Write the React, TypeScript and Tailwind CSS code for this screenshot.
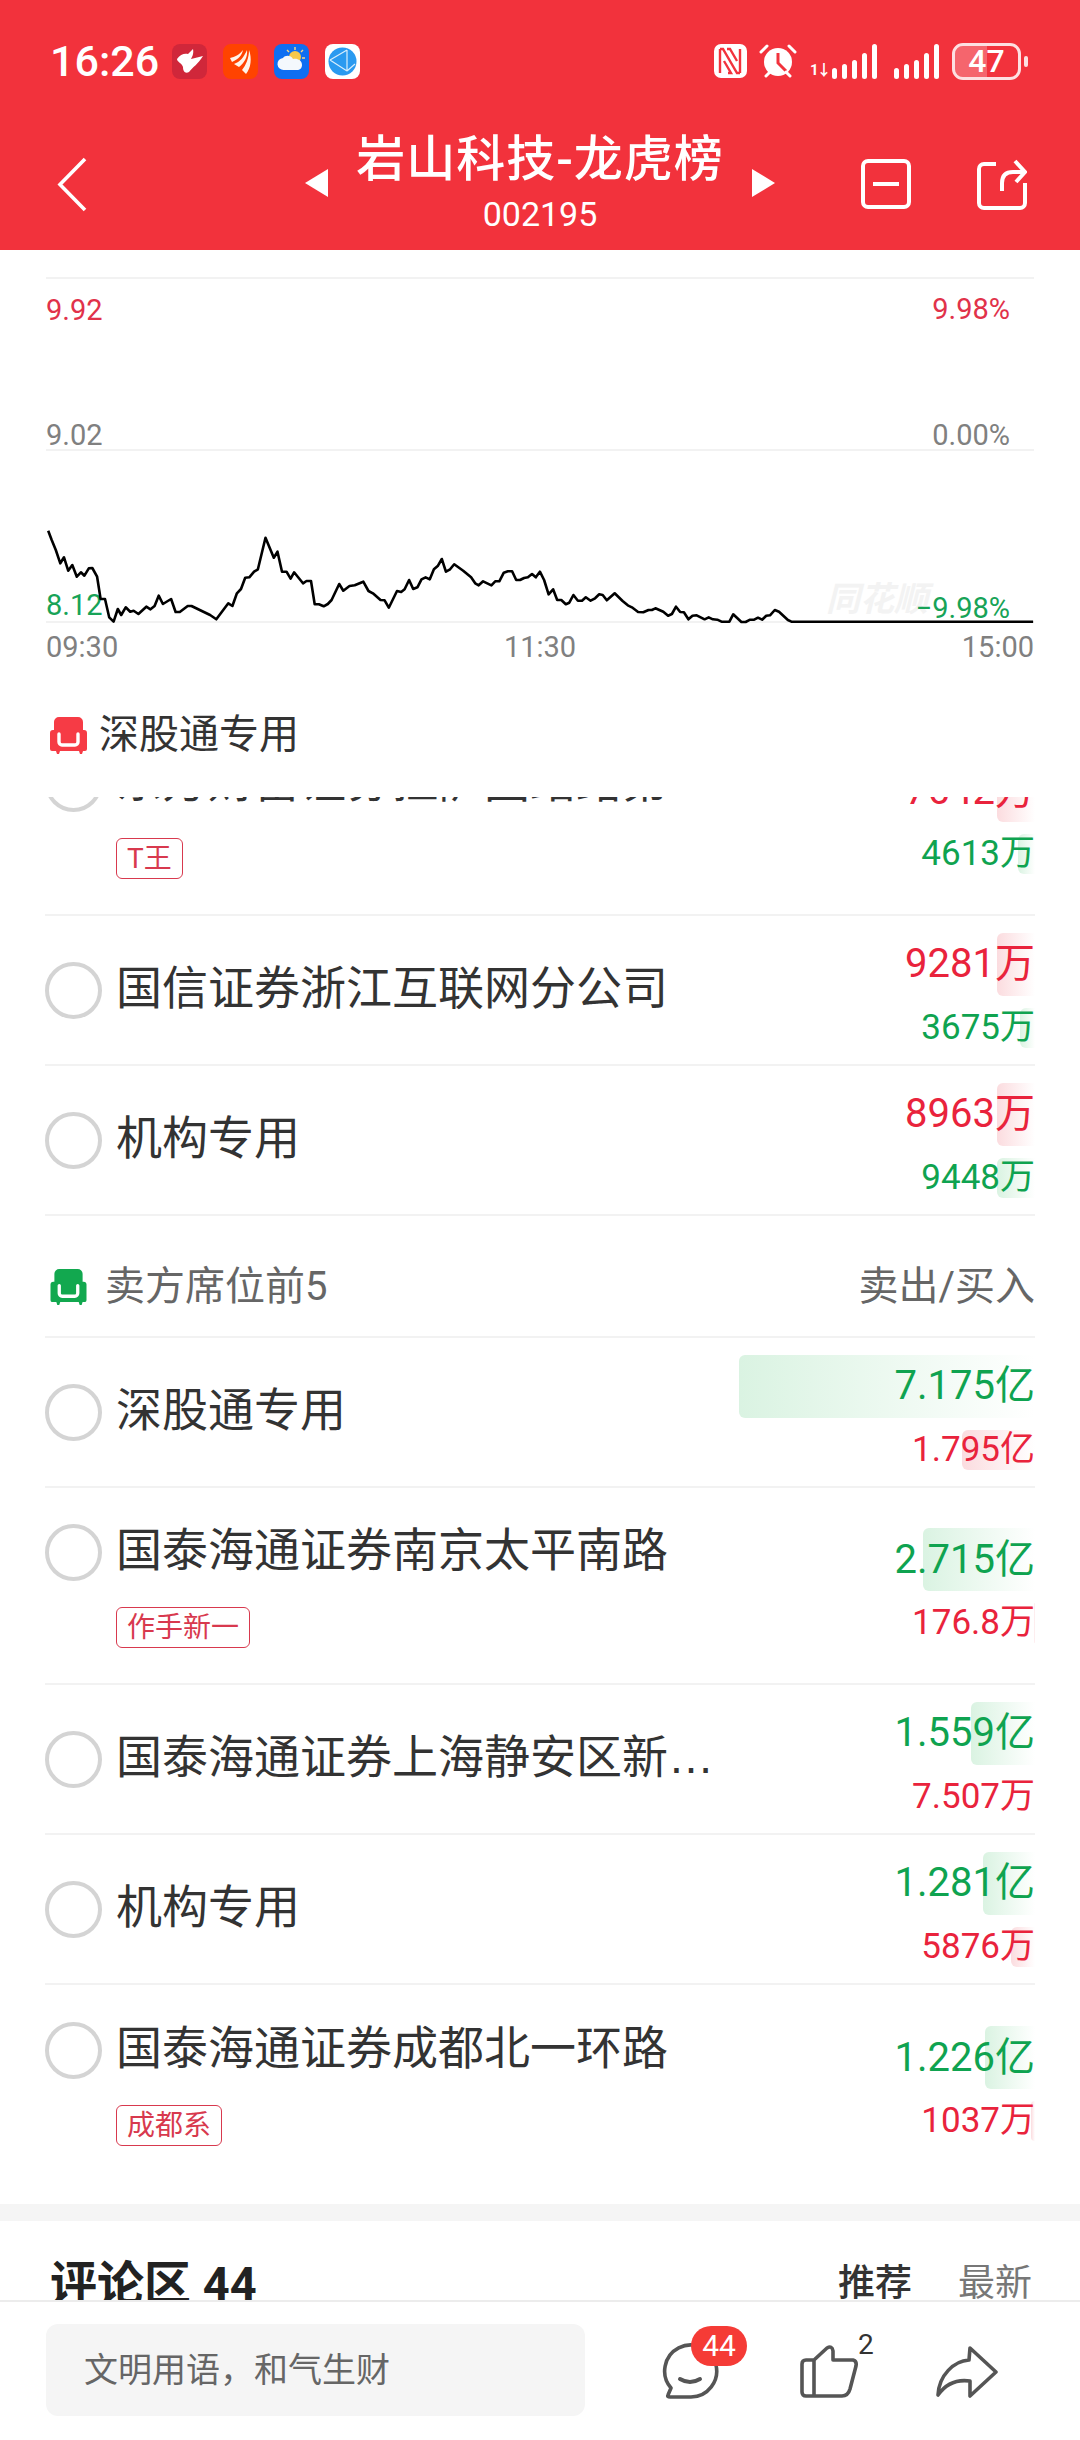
const zoomA = [[140,92],[150,120],[162,150],[175,190],[186,172],[198,212],[210,195],[223,230],[235,217],[245,227],[258,205],[268,204],[282,230],[292,297],[305,297],[317,352],[330,365],[342,327],[352,345],[365,322],[378,335],[388,332],[402,342],[425,320],[437,328],[449,318],[461,287],[473,312],[497,297],[510,336],[522,336],[545,318],[556,318],[610,345],[628,358],[663,310],[675,318],[688,280],[700,267],[712,233],[724,232],[738,215],[749,208],[771,113],[795,173],[806,155],[819,215],[832,215],[844,236],[854,217],[880,250],[890,243],[903,243],[914,313],[926,313],[940,319],[952,312],[963,300],[985,252],[997,272],[1015,258],[1030,256],[1055,245],[1070,273],[1083,280],[1105,300],[1117,301],[1129,323],[1153,273],[1165,276],[1175,268],[1188,240],[1200,267],[1212,262],[1224,238],[1236,232],[1248,238],[1260,208],[1272,197],[1283,177],[1295,215],[1307,208],[1319,193],[1345,212],[1368,232],[1380,250],[1390,256],[1403,244],[1427,256],[1438,244],[1450,244],[1463,218],[1475,214],[1487,214],[1499,240],[1510,240],[1522,234],[1533,232],[1545,222],[1556,232],[1568,215]]
const zoomB = [[12,240],[25,283],[38,268],[50,300],[62,300],[75,313],[85,308],[97,285],[110,302],[122,302],[133,292],[147,302],[160,295],[172,283],[182,285],[194,301],[217,280],[240,303],[255,316],[267,322],[285,336],[300,337],[315,330],[325,330],[335,325],[358,335],[372,347],[383,342],[395,320],[407,336],[418,337],[431,358],[443,347],[455,346],[478,358],[490,352],[502,358],[515,359],[527,365],[550,365],[561,343],[585,366],[597,366],[610,359],[622,359],[633,353],[645,359],[657,347],[668,346],[682,330],[694,335],[720,360],[730,365],[1432,365]]

const linePoints = [
  ...zoomA.map(([x, y]) => `${(x / 2.904).toFixed(1)},${(500 + y / 3).toFixed(1)}`),
  ...zoomB.map(([x, y]) => `${(540 + x / 2.904).toFixed(1)},${(500 + y / 3).toFixed(1)}`),
].join(' ')

interface Seat {
  name: string
  tag?: string
  first: string
  second: string
  firstBar: number
  secondBar: number
}

const buySeats: Seat[] = [
  { name: '东方财富证券拉萨团结路第二', tag: 'T王', first: '7642万', second: '4613万', firstBar: 38, secondBar: 17 },
  { name: '国信证券浙江互联网分公司', first: '9281万', second: '3675万', firstBar: 38, secondBar: 15 },
  { name: '机构专用', first: '8963万', second: '9448万', firstBar: 38, secondBar: 38 },
]

const sellSeats: Seat[] = [
  { name: '深股通专用', first: '7.175亿', second: '1.795亿', firstBar: 296, secondBar: 73 },
  { name: '国泰海通证券南京太平南路', tag: '作手新一', first: '2.715亿', second: '176.8万', firstBar: 112, secondBar: 1 },
  { name: '国泰海通证券上海静安区新闸路', first: '1.559亿', second: '7.507万', firstBar: 64, secondBar: 0 },
  { name: '机构专用', first: '1.281亿', second: '5876万', firstBar: 52, secondBar: 24 },
  { name: '国泰海通证券成都北一环路', tag: '成都系', first: '1.226亿', second: '1037万', firstBar: 50, secondBar: 4 },
]

function Sofa({ className }: { className: string }) {
  return (
    <svg viewBox="0 0 37 37" className={className}>
      <path
        fill="currentColor"
        d="M9 0h19a5 5 0 0 1 5 5v8h1a3 3 0 0 1 3 3v16a2 2 0 0 1-2 2h-2l-1 3h-2l-1-3H10l-1 3H7l-1-3H2a2 2 0 0 1-2-2V16a3 3 0 0 1 3-3h1V5a5 5 0 0 1 5-5z"
      />
      <path d="M9 17v8a3 3 0 0 0 3 3h13a3 3 0 0 0 3-3v-8" fill="none" stroke="#fff" strokeWidth="3.4" strokeLinecap="round" />
    </svg>
  )
}

function AppIcons() {
  return (
    <div className="flex gap-[16px] ml-[13px]">
      <svg viewBox="0 0 35 35" className="w-[35px] h-[35px]">
        <rect width="35" height="35" rx="8" fill="#d0273a" />
        <path fill="#fff" d="M5 15c3-5 8-6 11-5l5-5c1 5-1 8-2 10l12-3c-5 8-10 11-14 16-4 2-6-1-6-5-1-4-6-5-6-8z" />
      </svg>
      <svg viewBox="0 0 35 35" className="w-[35px] h-[35px]">
        <rect width="35" height="35" rx="8" fill="#ff4300" />
        <path fill="#fff4ea" d="M7 14c5-1 9-3 13-8-1 5-4 9-11 12z" />
        <path fill="#fff4ea" d="M11 20c6-2 10-7 13-14 1 7-3 13-8 17z" />
        <path fill="#fff4ea" d="M19 26c4-5 7-12 7-20 3 8 2 18-3 24z" />
      </svg>
      <svg viewBox="0 0 35 35" className="w-[35px] h-[35px]">
        <rect width="35" height="35" rx="8" fill="#0e6ef2" />
        <circle cx="21" cy="13" r="6" fill="#f6c84b" />
        <path d="M21 3v3M29 6l-2 2M31 14h-3M13 6l2 2" stroke="#f6d98a" strokeWidth="1.4" />
        <path fill="#f4f8fd" d="M10 26a6 6 0 0 1-1-12c2-3 8-3 10 1 4-1 9 1 9 6 0 3-2 5-5 5z" />
      </svg>
      <svg viewBox="0 0 35 35" className="w-[35px] h-[35px]">
        <rect width="35" height="35" rx="8" fill="#fff" />
        <circle cx="17.5" cy="17.5" r="14" fill="#2a9af0" />
        <path d="M5 16L22 6M5 16l17 11M22 6l0 21M22 27l8-7" stroke="#d8eefc" strokeWidth="1.2" fill="none" />
      </svg>
    </div>
  )
}

function SignalBars({ small }: { small?: boolean }) {
  return (
    <div className="flex items-end gap-[5px]">
      {small && <span className="text-white text-[15px] leading-[18px] font-bold w-[15px] tracking-[-2px] mr-[2px]">1↓</span>}
      <div className="w-[5px] h-[11px] rounded-full bg-white" />
      <div className="w-[5px] h-[15px] rounded-full bg-white" />
      <div className="w-[5px] h-[19px] rounded-full bg-white" />
      <div className="w-[5px] h-[26px] rounded-full bg-white" />
      <div className="w-[5px] h-[35px] rounded-full bg-white" />
    </div>
  )
}

function StatusBar() {
  return (
    <div className="h-[118px] flex items-center justify-between pl-[50px] pr-[52px] pt-[4px] text-white">
      <div className="flex items-center">
        <span className="text-[43px] leading-[43px] font-medium">16:26</span>
        <AppIcons />
      </div>
      <div className="flex items-center">
        <svg viewBox="0 0 33 34" className="w-[33px] h-[34px]">
          <rect width="33" height="34" rx="7" fill="#fff" />
          <path d="M6 5v24M6 5l3 0 14 24 3 0M26 29V5M13 5h3l7 12M10 17l7 12h-3" fill="none" stroke="#f2323c" strokeWidth="2.4" />
        </svg>
        <svg viewBox="0 0 38 36" className="w-[38px] h-[36px] ml-[12px]">
          <circle cx="19" cy="19" r="14" fill="#fff" />
          <path d="M19 10v10l8 8" fill="none" stroke="#f2323c" strokeWidth="3" />
          <path d="M2 9l6-6M36 9l-6-6M7 33l4-4M31 33l-4-4" stroke="#fff" strokeWidth="3" strokeLinecap="round" />
        </svg>
        <div className="ml-[13px]"><SignalBars small /></div>
        <div className="ml-[17px]"><SignalBars /></div>
        <div className="flex items-center ml-[13px]">
          <div className="relative w-[69px] h-[37px] rounded-[11px] border-[3px] border-white/85 overflow-hidden">
            <div className="absolute left-0 top-0 bottom-0 w-[32px] bg-white/25" />
            <span className="absolute inset-0 flex items-center justify-center text-[32px] leading-none font-medium">47</span>
          </div>
          <div className="w-[4px] h-[11px] rounded-full bg-white/85 ml-[3px]" />
        </div>
      </div>
    </div>
  )
}

function NavBar() {
  return (
    <div className="h-[132px] grid grid-cols-[1fr_auto_1fr] items-center text-white">
      <div className="pl-[56px]">
        <svg viewBox="0 0 32 55" className="w-[32px] h-[55px]">
          <path d="M29 2L4 27.5L29 53" fill="none" stroke="#fff" strokeWidth="3.6" />
        </svg>
      </div>
      <div className="flex items-center gap-[28px] -mt-[2px]">
        <svg viewBox="0 0 23 28" className="w-[23px] h-[28px]"><path d="M23 0v28L0 14z" fill="#fff" /></svg>
        <div className="flex flex-col items-center">
          <span className="text-[49px] leading-[58px] font-medium tracking-[1px] -mt-[2px]">岩山科技-龙虎榜</span>
          <span className="text-[34px] leading-[40px] mt-[5px]">002195</span>
        </div>
        <svg viewBox="0 0 23 28" className="w-[23px] h-[28px]"><path d="M0 0v28L23 14z" fill="#fff" /></svg>
      </div>
      <div className="flex items-center justify-end gap-[66px] pr-[53px]">
        <svg viewBox="0 0 50 50" className="w-[50px] h-[50px]">
          <rect x="2" y="2" width="46" height="46" rx="5" fill="none" stroke="#fff" strokeWidth="4" />
          <path d="M12 25h26" stroke="#fff" strokeWidth="4" />
        </svg>
        <svg viewBox="0 0 50 52" className="w-[50px] h-[52px]">
          <path d="M19 6H7a5 5 0 0 0-5 5v34a5 5 0 0 0 5 5h36a5 5 0 0 0 5-5V25" fill="none" stroke="#fff" strokeWidth="4" />
          <path d="M25 33v-8q0-11 11-11h11M38 3l10 11-9 10" fill="none" stroke="#fff" strokeWidth="4" />
        </svg>
      </div>
    </div>
  )
}

function Chart() {
  return (
    <section className="h-[547px] pt-[27px]">
      <div className="relative mx-[46px] h-[345px] text-[29px] leading-[34px]">
        <div className="h-[172px] border-t-2 border-[#f2f2f2]" />
        <div className="h-[172px] border-t-2 border-[#f2f2f2]" />
        <div className="border-t-2 border-[#f2f2f2]" />
        <span className="absolute left-0 top-[16px] text-[#e1324a]">9.92</span>
        <span className="absolute right-[24px] top-[15px] text-[#e1324a]">9.98%</span>
        <span className="absolute left-0 top-[141px] text-[#808080]">9.02</span>
        <span className="absolute right-[24px] top-[141px] text-[#808080]">0.00%</span>
        <span className="absolute left-[780px] top-[304px] text-[34px] leading-[36px] italic font-bold text-[#f3f3f3]">同花顺</span>
        <span className="absolute left-0 top-[311px] text-[#17a357]">8.12</span>
        <span className="absolute right-[24px] top-[314px] text-[#17a357]">−9.98%</span>
        <svg viewBox="46 277 989 347" className="absolute left-0 top-0 w-[989px] h-[347px]">
          <polyline points={linePoints} fill="none" stroke="#000" strokeWidth="2.6" strokeLinejoin="round" />
        </svg>
      </div>
      <div className="mx-[46px] h-[52px] flex items-center justify-between text-[29px] text-[#808080]">
        <span>09:30</span>
        <span>11:30</span>
        <span>15:00</span>
      </div>
      <div className="mx-[50px] h-[122px] flex items-center gap-[12px]">
        <Sofa className="w-[37px] h-[37px] text-[#f63b45]" />
        <span className="text-[40px] text-[#333]">深股通专用</span>
      </div>
    </section>
  )
}

function Amount({ text, bar, big, color, barClass }: { text: string; bar: number; big?: boolean; color: string; barClass: string }) {
  return (
    <div className={big ? 'relative h-[63px] flex items-center justify-end' : 'relative h-[40px] mt-[12px] flex items-center justify-end'}>
      {bar > 0 && (
        <div className={`absolute right-0 top-0 bottom-0 rounded-l-[6px] bg-gradient-to-r to-white ${barClass}`} style={{ width: bar }} />
      )}
      <span className={big ? `relative text-[40px] leading-[48px] ${color}` : `relative text-[35px] leading-[40px] ${color}`}>{text}</span>
    </div>
  )
}

function SeatRow({ seat, sell, last }: { seat: Seat; sell?: boolean; last?: boolean }) {
  const redBar = 'from-[#fbdcdf]'
  const greenBar = 'from-[#daf3e2]'
  return (
    <div
      className={`flex items-center justify-between ${seat.tag ? 'h-[197px]' : 'h-[150px]'} ${last ? '' : 'border-b-2 border-[#f2f2f2]'}`}
    >
      <div className="flex items-start gap-[14px] pb-[4px]">
        <div className="w-[57px] h-[57px] rounded-full border-[4px] border-[#d4d4d4] mt-[5px]" />
        <div className="flex flex-col items-start">
          <div className="w-[600px] truncate text-[46px] leading-[62px] text-[#333] font-[family-name:'Liberation_Sans','Noto_Sans_CJK_SC',sans-serif]">
            {seat.name}
          </div>
          {seat.tag && (
            <span className="mt-[26px] h-[41px] px-[10px] flex items-center rounded-[6px] border border-[#d8394e] text-[28px] leading-none text-[#d8394e]">
              {seat.tag}
            </span>
          )}
        </div>
      </div>
      <div className="w-[296px] flex flex-col">
        <Amount
          big
          text={seat.first}
          bar={seat.firstBar}
          color={sell ? 'text-[#0fa350]' : 'text-[#e9233c]'}
          barClass={sell ? greenBar : redBar}
        />
        <Amount
          text={seat.second}
          bar={seat.secondBar}
          color={sell ? 'text-[#e9233c]' : 'text-[#0fa350]'}
          barClass={sell ? redBar : greenBar}
        />
      </div>
    </div>
  )
}

function SeatList() {
  return (
    <div className="overflow-hidden">
      <div className="-mt-[78px] mx-[45px] pb-[22px]">
        {buySeats.map((s, i) => (
          <SeatRow key={i} seat={s} />
        ))}
        <div className="h-[122px] flex items-center justify-between pt-[22px] border-b-2 border-[#f2f2f2] text-[40px] text-[#666]">
          <div className="flex items-center gap-[18px] pl-[5px]">
            <Sofa className="w-[37px] h-[36px] text-[#12a84f]" />
            <span>卖方席位前5</span>
          </div>
          <span>卖出/买入</span>
        </div>
        {sellSeats.map((s, i) => (
          <SeatRow key={i} seat={s} sell last={i === sellSeats.length - 1} />
        ))}
      </div>
    </div>
  )
}

function BottomBar() {
  return (
    <div className="relative h-[140px] flex items-center bg-white border-t-2 border-[#ececec] pl-[46px]">
      <div className="w-[539px] h-[92px] mt-[-2px] flex items-center rounded-[12px] bg-[#f5f5f5] pl-[38px] text-[34px] text-[#666]">
        文明用语，和气生财
      </div>
      <div className="relative ml-[77px] w-[58px] h-[58px] mt-[2px]">
        <svg viewBox="0 0 58 58" className="w-[58px] h-[58px]">
          <path
            d="M9 45A26 26 0 1 1 29 54H8q-3 0-2-2z"
            fill="none"
            stroke="#555"
            strokeWidth="3.6"
            strokeLinejoin="round"
          />
          <path d="M18 36q10 6 20 0" fill="none" stroke="#555" strokeWidth="4" strokeLinecap="round" />
        </svg>
        <span className="absolute left-[29px] -top-[17px] w-[56px] h-[40px] rounded-[20px] bg-[#f53b36] flex items-center justify-center text-white text-[30px] leading-none">
          44
        </span>
      </div>
      <div className="relative ml-[80px] w-[60px] h-[54px] mt-[2px]">
        <svg viewBox="0 0 60 54" className="w-[60px] h-[54px]">
          <path
            d="M14 15L27 3q5-3 6 3v9h20q4 1 3 6l-6 23q-2 7-8 7H6q-4 0-4-4V19q0-4 4-4zM14 15v36"
            fill="none"
            stroke="#555"
            strokeWidth="3.6"
            strokeLinejoin="round"
          />
        </svg>
        <span className="absolute left-[58px] -top-[17px] text-[28px] leading-[34px] text-[#333]">2</span>
      </div>
      <div className="ml-[76px] w-[62px] h-[54px] mt-[2px]">
        <svg viewBox="0 0 62 54" className="w-[62px] h-[54px]">
          <path
            d="M34 3L60 27 34 51V36C20 34 9 40 2 50 3 30 18 16 33 15z"
            fill="none"
            stroke="#555"
            strokeWidth="3.6"
            strokeLinejoin="round"
          />
        </svg>
      </div>
    </div>
  )
}

export default function App() {
  return (
    <div className="w-[1080px] h-[2440px] flex flex-col overflow-hidden bg-white font-[family-name:Roboto,'Noto_Sans_CJK_SC',sans-serif]">
      <header className="h-[250px] flex-none bg-[#f2323c]">
        <StatusBar />
        <NavBar />
      </header>
      <main className="flex-1 overflow-hidden">
        <Chart />
        <SeatList />
        <div className="h-[17px] bg-[#f5f5f5]" />
        <div className="flex items-center justify-between pl-[50px] pr-[48px] pt-[36px]">
          <span className="text-[47px] leading-[54px] font-bold text-[#222]">评论区 44</span>
          <div className="flex gap-[46px] text-[37px] leading-[44px]">
            <span className="font-medium text-[#333]">推荐</span>
            <span className="text-[#777]">最新</span>
          </div>
        </div>
      </main>
      <BottomBar />
    </div>
  )
}
